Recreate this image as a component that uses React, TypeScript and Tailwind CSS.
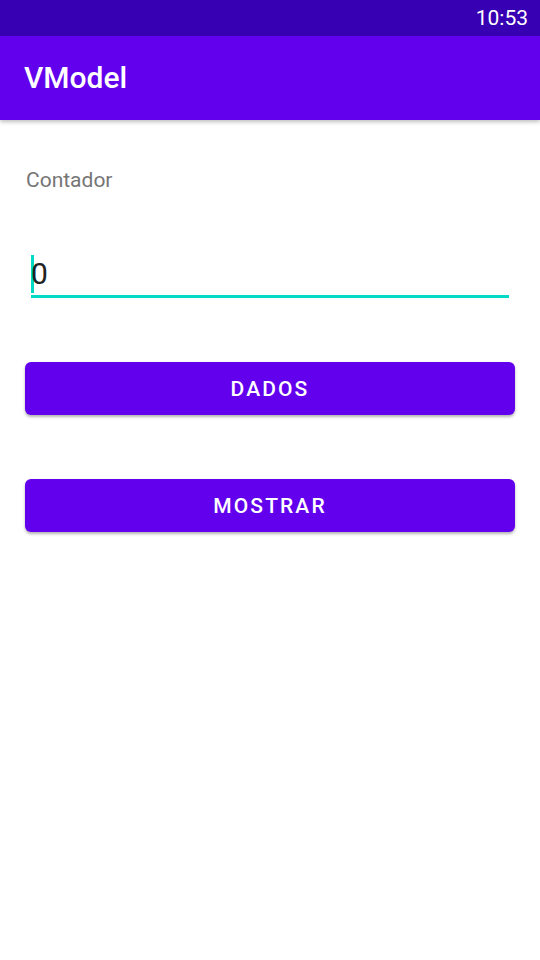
import React from "react";

export default function App() {
  return (
    <div className="w-[540px] h-[960px] bg-white flex flex-col" style={{ fontFamily: "Roboto, sans-serif" }}>
      <div className="h-[36px] bg-[#3700B3] flex items-center justify-end pr-[12px]">
        <span className="text-white text-[21px] leading-none">10:53</span>
      </div>
      <div className="h-[84px] bg-[#6200EE] flex items-center pl-[24px] shadow-[0_2px_4px_rgba(0,0,0,0.25)] relative z-10">
        <span className="text-white text-[30px] font-medium leading-none">VModel</span>
      </div>
      <div className="flex flex-col px-[25px]">
        <div className="pt-[48px] pl-[1px] text-[#757575] text-[21px] leading-[24px]">Contador</div>
        <div className="mt-[63px] mx-[6px] flex flex-col">
          <div className="flex items-center h-[38px]">
            <div className="w-[3px] h-[38px] bg-[#03DAC5]"></div>
            <span className="text-[#212121] text-[30px] leading-none -ml-[3px]">0</span>
          </div>
          <div className="h-[3px] bg-[#03DAC5] mt-[2px]"></div>
        </div>
        <button className="mt-[64px] h-[53px] w-full rounded-[6px] bg-[#6200EE] text-white text-[21px] font-medium tracking-[0.1em] pt-[3px] shadow-[0_2px_3px_rgba(0,0,0,0.3)]">
          DADOS
        </button>
        <button className="mt-[64px] h-[53px] w-full rounded-[6px] bg-[#6200EE] text-white text-[21px] font-medium tracking-[0.1em] pt-[3px] shadow-[0_2px_3px_rgba(0,0,0,0.3)]">
          MOSTRAR
        </button>
      </div>
    </div>
  );
}
